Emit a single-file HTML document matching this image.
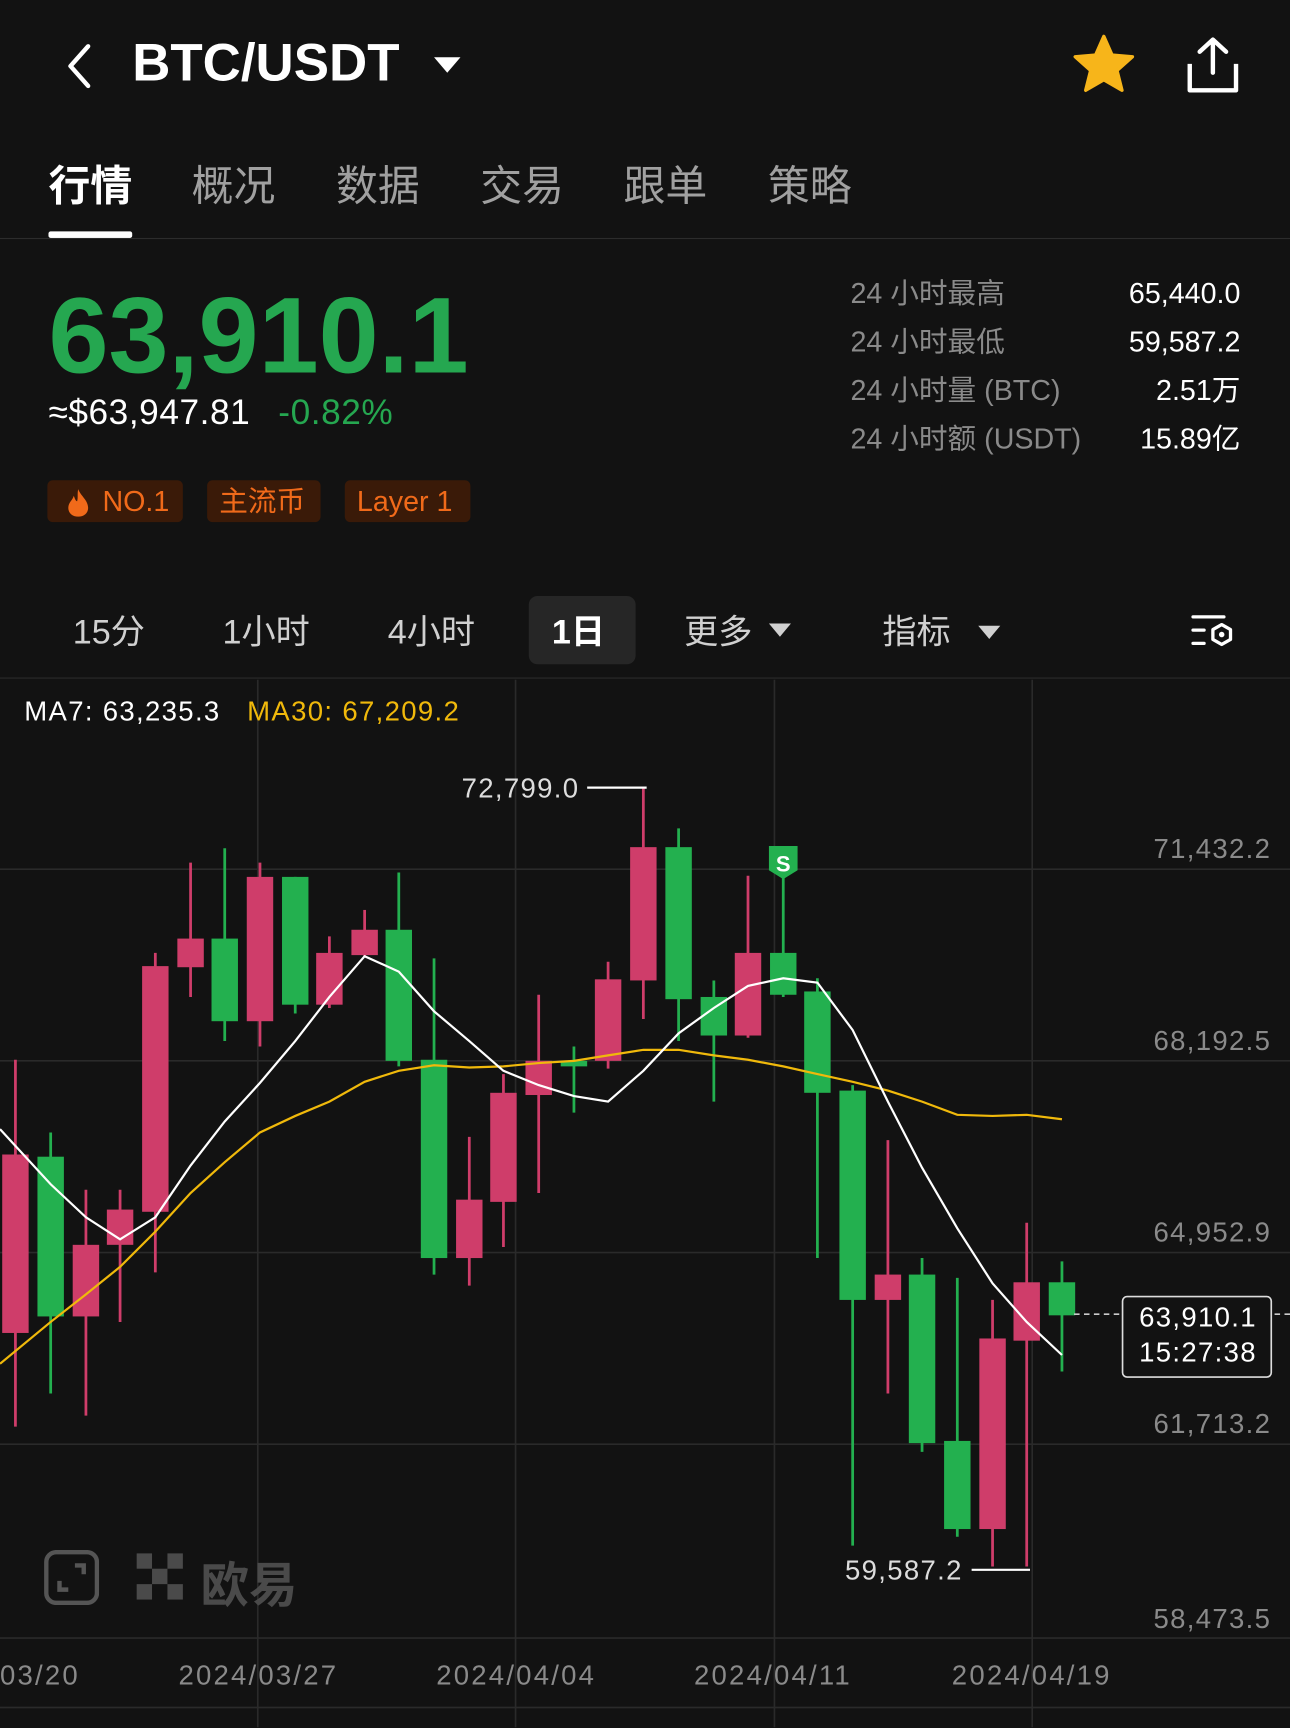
<!DOCTYPE html>
<html><head><meta charset="utf-8"><style>
*{margin:0;padding:0;box-sizing:border-box}
html,body{width:1290px;height:1728px;overflow:hidden;background:#121212}
#w{position:absolute;left:0;top:0;width:1171px;height:1568px;transform:scale(1.10162);transform-origin:0 0;background:#121212;font-family:"Liberation Sans","Noto Sans CJK SC",sans-serif;color:#fff}
.a{position:absolute;white-space:nowrap}
.g{color:#8a8a8a}
.ax{letter-spacing:1.2px}
.tag{position:absolute;top:436px;height:38px;background:#3a1a08;color:#f06a1a;border-radius:5px;font-size:26px;line-height:38px;padding:0 11px}
</style></head><body><div id="w">
<svg class="a" style="left:52px;top:36px" width="40" height="50"><path d="M28 6 L12 24 L28 42" stroke="#fff" stroke-width="4" fill="none" stroke-linecap="round" stroke-linejoin="round"/></svg>
<div class="a" style="left:120px;top:30px;font-size:48px;font-weight:bold">BTC/USDT</div>
<svg class="a" style="left:392px;top:50px" width="30" height="20"><path d="M2 2 L26 2 L14 16Z" fill="#fff"/></svg>
<svg class="a" style="left:972px;top:30px" width="60" height="58"><path d="M30 3 L37.5 20 L56 21.5 L42 34 L46.5 52 L30 42.5 L13.5 52 L18 34 L4 21.5 L22.5 20Z" fill="#f7b51a" stroke="#f7b51a" stroke-width="3" stroke-linejoin="round"/></svg>
<svg class="a" style="left:1074px;top:32px" width="54" height="56"><path d="M27 4 V34 M15 15 L27 4 L39 15" stroke="#fff" stroke-width="4" fill="none" stroke-linecap="round" stroke-linejoin="round"/><path d="M6 26 V50 H48 V26" stroke="#fff" stroke-width="4" fill="none" stroke-linejoin="round"/></svg>
<div class="a" style="left:44px;top:138px;font-size:38px;font-weight:bold">行情</div>
<div class="a" style="left:44px;top:210px;width:76px;height:6px;background:#fff;border-radius:2px"></div>
<div class="a g" style="left:174px;top:138px;font-size:38px;color:#a0a0a0">概况</div>
<div class="a g" style="left:305px;top:138px;font-size:38px;color:#a0a0a0">数据</div>
<div class="a g" style="left:436px;top:138px;font-size:38px;color:#a0a0a0">交易</div>
<div class="a g" style="left:566px;top:138px;font-size:38px;color:#a0a0a0">跟单</div>
<div class="a g" style="left:697px;top:138px;font-size:38px;color:#a0a0a0">策略</div>
<div class="a" style="left:0;top:216px;width:1171px;height:1px;background:#2c2c2c"></div>
<div class="a" style="left:44px;top:248px;font-size:98px;font-weight:bold;color:#25a750;letter-spacing:0px">63,910.1</div>
<div class="a" style="left:44px;top:356px;font-size:32px;letter-spacing:0.5px">≈$63,947.81 <span style="color:#25a750;margin-left:16px">-0.82%</span></div>
<div class="a g" style="left:772px;top:244px;font-size:26px;line-height:44px">24 小时最高<br>24 小时最低<br>24 小时量 (BTC)<br>24 小时额 (USDT)</div>
<div class="a" style="right:45px;top:244px;font-size:26px;line-height:44px;text-align:right">65,440.0<br>59,587.2<br>2.51万<br>15.89亿</div>
<div class="tag" style="left:43px;width:123px;padding-left:50px">NO.1</div>
<svg class="a" style="left:60px;top:442px" width="22" height="28"><path d="M11 2 C13 8 20 12 20 19 C20 24 16 27 11 27 C6 27 2 24 2 19 C2 14 6 12 7 8 C8 11 9 13 10 13 C11 10 10 6 11 2Z" fill="#f06a1a"/></svg>
<div class="tag" style="left:188px;width:103px">主流币</div>
<div class="tag" style="left:313px;width:114px">Layer 1</div>
<div class="a" style="left:480px;top:541px;width:97px;height:62px;background:#262626;border-radius:8px"></div>
<div class="a" style="left:66px;top:548px;font-size:31px;color:#d0d0d0">15分</div>
<div class="a" style="left:202px;top:548px;font-size:31px;color:#d0d0d0">1小时</div>
<div class="a" style="left:352px;top:548px;font-size:31px;color:#d0d0d0">4小时</div>
<div class="a" style="left:501px;top:548px;font-size:31px;font-weight:bold">1日</div>
<div class="a" style="left:621px;top:548px;font-size:31px;color:#d0d0d0">更多</div>
<svg class="a" style="left:696px;top:564px" width="24" height="16"><path d="M2 2H22L12 14Z" fill="#d0d0d0"/></svg>
<div class="a" style="left:801px;top:548px;font-size:31px;color:#d0d0d0">指标</div>
<svg class="a" style="left:886px;top:566px" width="24" height="16"><path d="M2 2H22L12 14Z" fill="#d0d0d0"/></svg>
<svg class="a" style="left:1080px;top:555px" width="44" height="38"><path d="M3 5H31M3 17H13M3 29H13" stroke="#fff" stroke-width="3" stroke-linecap="round"/><path d="M29 12 L37 16.5 V25.5 L29 30 L21 25.5 V16.5Z" stroke="#fff" stroke-width="3" fill="none" stroke-linejoin="round"/><circle cx="29" cy="21" r="2.5" fill="#fff"/></svg>
<div class="a" style="left:0;top:615px;width:1171px;height:1px;background:#2c2c2c"></div>
<svg class="a" style="left:0;top:0" width="1171" height="1568">
<g stroke="#2a2a2a" stroke-width="1.5">
<line x1="234" y1="617" x2="234" y2="1568"/><line x1="468" y1="617" x2="468" y2="1568"/><line x1="703" y1="617" x2="703" y2="1568"/><line x1="937" y1="617" x2="937" y2="1568"/>
<line x1="0" y1="789" x2="1171" y2="789"/><line x1="0" y1="963" x2="1171" y2="963"/><line x1="0" y1="1137" x2="1171" y2="1137"/><line x1="0" y1="1311" x2="1171" y2="1311"/><line x1="0" y1="1487" x2="1171" y2="1487"/><line x1="0" y1="1550" x2="1171" y2="1550"/>
</g>
<g id="c"></g>
<polyline fill="none" stroke="#f0b90b" stroke-width="2" points="0,1238 46,1200 78,1175 109,1150 141,1118 173,1083 204,1055 236,1028 268,1013 299,1000 331,982 362,972 394,967 426,969 457,968 489,965 521,963 552,958 584,953 616,953 648,958 679,962 711,968 742,975 774,982 806,990 837,1000 869,1012 901,1013 932,1012 964,1016"/>
<polyline fill="none" stroke="#fff" stroke-width="2" points="0,1025 46,1075 78,1105 109,1125 141,1105 173,1058 204,1018 236,983 268,945 299,905 331,868 362,882 394,918 426,945 457,972 489,985 521,995 552,1000 584,972 616,938 648,915 679,895 711,888 742,892 774,935 806,1000 837,1060 869,1115 901,1165 932,1200 964,1230"/>
<line x1="533" y1="715" x2="587" y2="715" stroke="#fff" stroke-width="2"/>
<line x1="882" y1="1425" x2="935" y2="1425" stroke="#fff" stroke-width="2"/>
<line x1="975" y1="1193" x2="1018" y2="1193" stroke="#ccc" stroke-width="1.5" stroke-dasharray="5 4"/>
<line x1="1157" y1="1193" x2="1171" y2="1193" stroke="#ccc" stroke-width="1.5" stroke-dasharray="5 4"/>
<path d="M698 768 H724 V790 L711 798 L698 790Z" fill="#23b04f"/>
<text x="711" y="791" fill="#fff" font-size="20" font-weight="bold" text-anchor="middle" font-family="Liberation Sans">S</text>
<rect x="1019" y="1177" width="135" height="73" rx="4" fill="#121212" stroke="#ddd" stroke-width="1.5"/>
</svg>
<div class="a ax" style="left:22px;top:632px;font-size:25px">MA7: 63,235.3 <span style="color:#f0b90b;margin-left:16px">MA30: 67,209.2</span></div>
<div class="a ax" style="left:419px;top:702px;font-size:25px;color:#ddd">72,799.0</div>
<div class="a ax" style="left:767px;top:1412px;font-size:25px;color:#ddd">59,587.2</div>
<div class="a ax" style="left:1034px;top:1180px;font-size:25px;line-height:32px;text-align:center">63,910.1<br>15:27:38</div>
<div class="a g ax" style="right:17px;top:757px;font-size:25px">71,432.2</div>
<div class="a g ax" style="right:17px;top:931px;font-size:25px">68,192.5</div>
<div class="a g ax" style="right:17px;top:1105px;font-size:25px">64,952.9</div>
<div class="a g ax" style="right:17px;top:1279px;font-size:25px">61,713.2</div>
<div class="a g ax" style="right:17px;top:1456px;font-size:25px">58,473.5</div>
<div class="a g" style="left:0;top:1507px;font-size:25px;letter-spacing:2px">03/20</div>
<div class="a g" style="left:162px;top:1507px;font-size:25px;letter-spacing:2px">2024/03/27</div>
<div class="a g" style="left:396px;top:1507px;font-size:25px;letter-spacing:2px">2024/04/04</div>
<div class="a g" style="left:630px;top:1507px;font-size:25px;letter-spacing:2px">2024/04/11</div>
<div class="a g" style="left:864px;top:1507px;font-size:25px;letter-spacing:2px">2024/04/19</div>
<svg class="a" style="left:40px;top:1407px" width="50" height="50"><rect x="2" y="2" width="46" height="46" rx="9" stroke="#555" stroke-width="4" fill="none"/><path d="M28 14H36V22M22 36H14V28" stroke="#555" stroke-width="4" fill="none"/></svg>
<svg class="a" style="left:124px;top:1410px" width="44" height="44" fill="#4a4a4a"><rect x="0" y="0" width="14" height="14"/><rect x="28" y="0" width="14" height="14"/><rect x="14" y="14" width="14" height="14"/><rect x="0" y="28" width="14" height="14"/><rect x="28" y="28" width="14" height="14"/></svg>
<div class="a" style="left:182px;top:1403px;font-size:44px;font-weight:bold;color:#4a4a4a">欧易</div>
</div>
<script>
var d=[[14,0,1048,1210,962,1295],[46,1,1050,1195,1028,1265],[78,0,1130,1195,1080,1285],[109,0,1098,1130,1080,1200],[141,0,877,1100,865,1155],[173,0,852,878,783,905],[204,1,852,927,770,945],[236,0,796,927,783,950],[268,1,796,912,796,920],[299,0,865,912,850,915],[331,0,844,867,826,868],[362,1,844,963,792,968],[394,1,962,1142,870,1157],[426,0,1089,1142,1032,1167],[457,0,992,1091,975,1132],[489,0,963,994,903,1083],[521,1,963,968,950,1010],[552,0,889,963,873,970],[584,0,769,890,715,925],[616,1,769,907,752,945],[648,1,905,940,890,1000],[679,0,865,940,795,942],[711,1,865,903,795,905],[742,1,900,992,888,1142],[774,1,990,1180,985,1403],[806,0,1157,1180,1035,1265],[837,1,1157,1310,1142,1318],[869,1,1308,1388,1160,1395],[901,0,1215,1388,1180,1422],[932,0,1164,1217,1110,1422],[964,1,1164,1194,1145,1245]];
var s='';d.forEach(function(c){var col=c[1]?'#23b04f':'#cf3d6a';s+='<line x1="'+c[0]+'" x2="'+c[0]+'" y1="'+c[4]+'" y2="'+c[5]+'" stroke="'+col+'" stroke-width="2.5"/><rect x="'+(c[0]-12)+'" y="'+c[2]+'" width="24" height="'+Math.max(3,c[3]-c[2])+'" fill="'+col+'"/>';});
document.getElementById('c').innerHTML=s;
</script>
</body></html>
